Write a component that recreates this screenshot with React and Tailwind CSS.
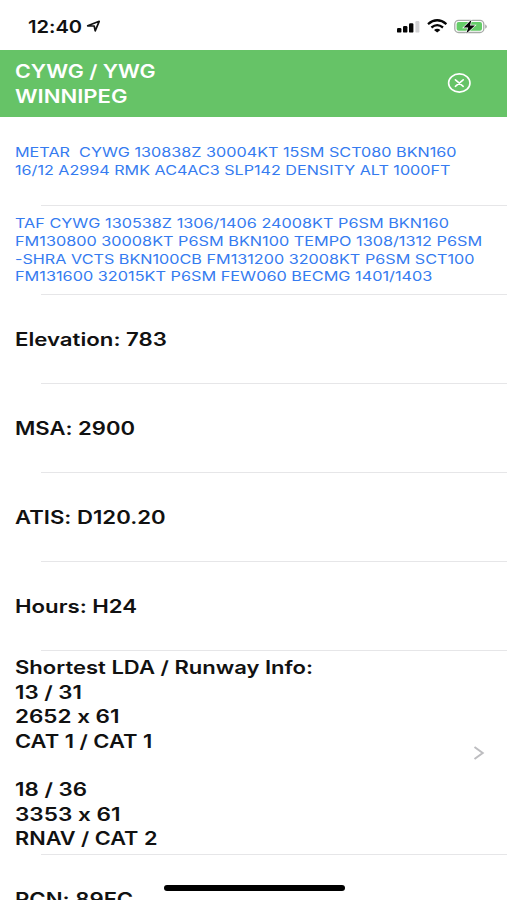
import { useLayoutEffect, useRef, useState } from "react";

// A line of text stretched horizontally to a given width.
function Line({ text, width, className = "" }) {
  const ref = useRef(null);
  const [scale, setScale] = useState(1.2);
  useLayoutEffect(() => {
    setScale(width / ref.current.offsetWidth);
  }, [text, width]);
  return (
    <div className={`whitespace-pre ${className}`}>
      <span ref={ref} className="inline-block origin-left" style={{ transform: `scaleX(${scale})` }}>
        {text}
      </span>
    </div>
  );
}

const metar = [
  ["METAR  CYWG 130838Z 30004KT 15SM SCT080 BKN160", 442],
  ["16/12 A2994 RMK AC4AC3 SLP142 DENSITY ALT 1000FT", 435.5],
];

const taf = [
  ["TAF CYWG 130538Z 1306/1406 24008KT P6SM BKN160", 433.5],
  ["FM130800 30008KT P6SM BKN100 TEMPO 1308/1312 P6SM", 467.5],
  ["-SHRA VCTS BKN100CB FM131200 32008KT P6SM SCT100", 459.5],
  ["FM131600 32015KT P6SM FEW060 BECMG 1401/1403", 418],
];

const facts = [
  ["Elevation: 783", 151.5],
  ["MSA: 2900", 120],
  ["ATIS: D120.20", 151],
  ["Hours: H24", 122],
];

const runways = [
  ["Shortest LDA / Runway Info:", 298],
  ["13 / 31", 67.5],
  ["2652 x 61", 105],
  ["CAT 1 / CAT 1", 137.5],
  ["", 0],
  ["18 / 36", 72.5],
  ["3353 x 61", 105.5],
  ["RNAV / CAT 2", 142],
];

function Separator() {
  return <div className="ml-[41px] h-px shrink-0 bg-[#e6e6e8]" />;
}

function StatusBar() {
  return (
    <div className="flex h-[50px] shrink-0 items-start">
      <div className="ml-[28px] mt-[15px] w-[54px] text-[17.5px] font-semibold leading-[24px]">
        <Line text="12:40" width={54} />
      </div>
      <svg className="ml-[4px] mt-[20px]" width="16" height="13" viewBox="0 0 16 13" fill="none" stroke="#111" strokeWidth="1.7" strokeLinejoin="round">
        <path d="M1.7 5.8 L13.2 1.3 L9.2 10.8 L8.2 6 Z" />
      </svg>
      <svg className="ml-[294px] mt-[19px]" width="93" height="16" viewBox="0 0 93 16">
        <g fill="#050505">
          <rect x="1" y="9" width="4.4" height="4.6" rx="1.2" />
          <rect x="7" y="7" width="4.4" height="6.6" rx="1.2" />
          <rect x="13" y="4.2" width="4.4" height="9.4" rx="1.2" />
        </g>
        <rect x="19.4" y="2" width="4" height="11.6" rx="1.2" fill="#d2d2d4" />
        <g fill="none" stroke="#050505" strokeWidth="2.3">
          <path d="M32 5.1 Q41.2 -2.5 50.4 5.1" />
          <path d="M35.4 8.5 Q41.2 3.8 47 8.5" />
        </g>
        <path d="M38 10.9 Q41.2 8.6 44.4 10.9 L41.2 13.5 Z" fill="#050505" />
        <rect x="58.8" y="1.3" width="29" height="12.2" rx="3.8" fill="#fff" stroke="#a6aaa6" strokeWidth="1.3" />
        <rect x="60.6" y="3" width="25.4" height="8.8" rx="2" fill="#65cc68" />
        <path d="M89.2 5.2 Q92.6 7.5 89.2 9.8 Z" fill="#a6aaa6" />
        <path d="M75.5 0.8 L67.6 8.6 H72.2 L70.3 14.4 L79 6.5 H74 Z" fill="#050505" stroke="#fff" strokeWidth="1.3" paintOrder="stroke" />
      </svg>
    </div>
  );
}

function Lines({ items, className }) {
  return (
    <div className={className}>
      {items.map(([text, width], i) => (
        <Line key={i} text={text || " "} width={width || 5} />
      ))}
    </div>
  );
}

export default function App() {
  return (
    <div className="relative flex h-[900px] w-[507px] flex-col overflow-hidden bg-white font-['Inter',sans-serif] text-[#111] [font-feature-settings:'calt'_0]">
      <StatusBar />
      <header className="flex h-[66.5px] shrink-0 items-center bg-[#66c367] pl-[14.5px] pr-[35px] text-white">
        <Lines
          className="flex-1 pt-px text-[18.2px] font-semibold leading-[24.3px]"
          items={[["CYWG / YWG", 140.5], ["WINNIPEG", 113]]}
        />
        <svg width="26" height="22" viewBox="0 0 26 22" fill="none" stroke="#fff" strokeWidth="1.6" strokeLinecap="round">
          <ellipse cx="13.3" cy="11" rx="10.7" ry="9.1" />
          <path d="M9.4 7.8 L17.2 14.3 M17.2 7.8 L9.4 14.3" />
        </svg>
      </header>
      <section className="flex h-[88.5px] shrink-0 items-center pl-[14.5px] pt-[1.5px]">
        <Lines items={metar} className="text-[13px] leading-[17.7px] text-[#357bf0]" />
      </section>
      <Separator />
      <section className="flex h-[87.5px] shrink-0 items-center pl-[14.5px] pt-[2px]">
        <Lines items={taf} className="text-[13px] leading-[17.7px] text-[#357bf0]" />
      </section>
      <Separator />
      {facts.map((fact) => (
        <div key={fact[0]} className="shrink-0">
          <section className="flex h-[88px] items-center pl-[14.5px] pt-[2px]">
            <Lines items={[fact]} className="text-[18.2px] font-semibold leading-[24.3px]" />
          </section>
          <Separator />
        </div>
      ))}
      <section className="flex h-[203.5px] shrink-0 items-center justify-between pl-[14.5px] pr-[22px] pt-[1.5px]">
        <Lines items={runways} className="text-[18.2px] font-semibold leading-[24.4px]" />
        <svg width="12" height="14" viewBox="0 0 12 14" fill="none" stroke="#bdbdc0" strokeWidth="2">
          <path d="M1.5 1 L9.7 7 L1.5 13" />
        </svg>
      </section>
      <Separator />
      <section className="flex h-[87px] shrink-0 items-center pl-[14.5px] pt-px">
        <Lines items={[["PCN: 89FC", 118.5]]} className="text-[18.2px] font-semibold leading-[24.3px]" />
      </section>
      <div className="absolute left-[164px] top-[885px] h-[6px] w-[180.5px] rounded-full bg-black" />
    </div>
  );
}
